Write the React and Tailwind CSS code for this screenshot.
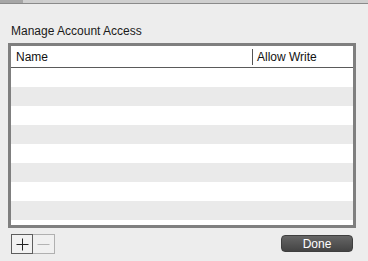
export default function App() {
  const rows = [0, 1, 2, 3, 4, 5, 6, 7]

  return (
    <div className="w-[368px] h-[261px] bg-[#ededed] overflow-hidden" style={{ fontFamily: '"Liberation Sans", Arial, sans-serif' }}>
      {/* top strip */}
      <div className="flex h-[4px] border-b border-[#8a8a8a]">
        <div className="w-[23px] bg-[#a6a6a6]" />
        <div className="flex-1 bg-[#cfcfcf]" />
      </div>

      <div className="ml-[11px] mt-[20px] text-[12px] leading-[14px] text-[#1a1a1a]">Manage Account Access</div>

      {/* table */}
      <div className="ml-[8px] mt-[5px] w-[348px] h-[185px] border-[3px] border-[#7f7f7f] bg-white flex flex-col">
        <div className="flex items-center h-[22px] border-b border-[#5a5a5a] text-[12px] text-[#111]">
          <div className="w-[242px] pl-[5px] border-r border-[#555] h-[16px] flex items-center">Name</div>
          <div className="pl-[4px]">Allow Write</div>
        </div>
        {rows.map((r) => (
          <div key={r} className={`h-[19px] ${r % 2 === 1 ? 'bg-[#eaeaea]' : 'bg-white'}`} />
        ))}
      </div>

      {/* footer */}
      <div className="flex items-start mt-[6px] ml-[11px] mr-[15px]">
        <div className="flex">
          <div className="w-[22px] h-[20px] border border-[#5e5e5e] bg-[#f2f2f2] flex items-center justify-center">
            <svg width="13" height="13" viewBox="0 0 13 13">
              <path d="M6.5 0.5v12M0.5 6.5h12" stroke="#222" strokeWidth="1" />
            </svg>
          </div>
          <div className="w-[22px] h-[20px] border border-l-0 border-[#b0b0b0] bg-[#f0f0f0] flex items-center justify-center">
            <svg width="13" height="13" viewBox="0 0 13 13">
              <path d="M0.5 6.5h12" stroke="#b3b3b3" strokeWidth="1" />
            </svg>
          </div>
        </div>
        <div className="ml-auto mt-[1px] w-[72px] h-[17px] rounded-[4px] bg-gradient-to-b from-[#666] to-[#444] border border-[#3f3f3f] flex items-center justify-center text-white text-[12px] leading-none">
          Done
        </div>
      </div>
    </div>
  )
}
